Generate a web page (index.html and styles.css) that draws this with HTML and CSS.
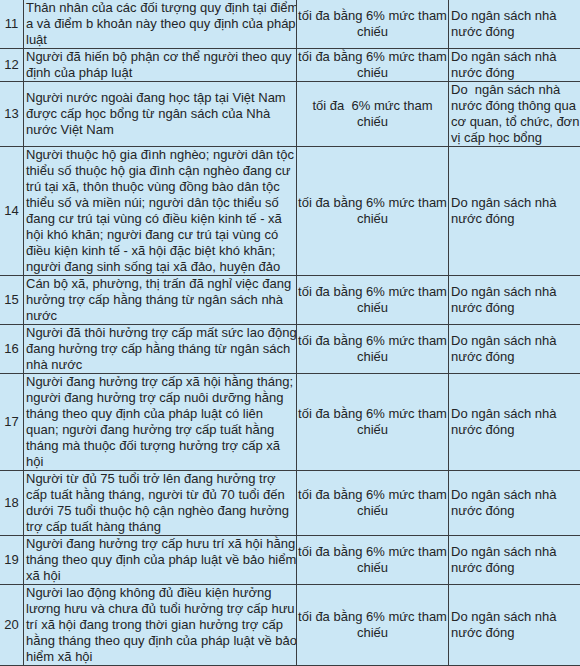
FILE: index.html
```html
<!DOCTYPE html>
<html lang="vi">
<head>
<meta charset="utf-8">
<title>Bảng đối tượng</title>
<link rel="stylesheet" href="styles.css">
</head>
<body>
<table class="tbl">
  <colgroup>
    <col class="c-no">
    <col class="c-desc">
    <col class="c-rate">
    <col class="c-src">
  </colgroup>
  <tbody>
    <tr class="r3">
      <td class="no">11</td>
      <td class="desc">Thân nhân của các đối tượng quy định tại điểm<br>a và điểm b khoản này theo quy định của pháp<br>luật</td>
      <td class="rate">tối đa bằng 6% mức tham<br>chiếu</td>
      <td class="src">Do ngân sách nhà<br>nước đóng</td>
    </tr>
    <tr class="r2">
      <td class="no">12</td>
      <td class="desc">Người đã hiến bộ phận cơ thể người theo quy<br>định của pháp luật</td>
      <td class="rate">tối đa bằng 6% mức tham<br>chiếu</td>
      <td class="src">Do ngân sách nhà<br>nước đóng</td>
    </tr>
    <tr class="r4">
      <td class="no">13</td>
      <td class="desc">Người nước ngoài đang học tập tại Việt Nam<br>được cấp học bổng từ ngân sách của Nhà<br>nước Việt Nam</td>
      <td class="rate">tối đa&nbsp; 6% mức tham<br>chiếu</td>
      <td class="src">Do&nbsp; ngân sách nhà<br>nước đóng thông qua<br>cơ quan, tổ chức, đơn<br>vị cấp học bổng</td>
    </tr>
    <tr class="r8">
      <td class="no">14</td>
      <td class="desc">Người thuộc hộ gia đình nghèo; người dân tộc<br>thiểu số thuộc hộ gia đình cận nghèo đang cư<br>trú tại xã, thôn thuộc vùng đồng bào dân tộc<br>thiểu số và miền núi; người dân tộc thiểu số<br>đang cư trú tại vùng có điều kiện kinh tế - xã<br>hội khó khăn; người đang cư trú tại vùng có<br>điều kiện kinh tế - xã hội đặc biệt khó khăn;<br>người đang sinh sống tại xã đảo, huyện đảo</td>
      <td class="rate">tối đa bằng 6% mức tham<br>chiếu</td>
      <td class="src">Do ngân sách nhà<br>nước đóng</td>
    </tr>
    <tr class="r3">
      <td class="no">15</td>
      <td class="desc">Cán bộ xã, phường, thị trấn đã nghỉ việc đang<br>hưởng trợ cấp hằng tháng từ ngân sách nhà<br>nước</td>
      <td class="rate">tối đa bằng 6% mức tham<br>chiếu</td>
      <td class="src">Do ngân sách nhà<br>nước đóng</td>
    </tr>
    <tr class="r3">
      <td class="no">16</td>
      <td class="desc">Người đã thôi hưởng trợ cấp mất sức lao động<br>đang hưởng trợ cấp hằng tháng từ ngân sách<br>nhà nước</td>
      <td class="rate">tối đa bằng 6% mức tham<br>chiếu</td>
      <td class="src">Do ngân sách nhà<br>nước đóng</td>
    </tr>
    <tr class="r6">
      <td class="no">17</td>
      <td class="desc">Người đang hưởng trợ cấp xã hội hằng tháng;<br>người đang hưởng trợ cấp nuôi dưỡng hằng<br>tháng theo quy định của pháp luật có liên<br>quan; người đang hưởng trợ cấp tuất hằng<br>tháng mà thuộc đối tượng hưởng trợ cấp xã<br>hội</td>
      <td class="rate">tối đa bằng 6% mức tham<br>chiếu</td>
      <td class="src">Do ngân sách nhà<br>nước đóng</td>
    </tr>
    <tr class="r4">
      <td class="no">18</td>
      <td class="desc">Người từ đủ 75 tuổi trở lên đang hưởng trợ<br>cấp tuất hằng tháng, người từ đủ 70 tuổi đến<br>dưới 75 tuổi thuộc hộ cận nghèo đang hưởng<br>trợ cấp tuất hàng tháng</td>
      <td class="rate">tối đa bằng 6% mức tham<br>chiếu</td>
      <td class="src">Do ngân sách nhà<br>nước đóng</td>
    </tr>
    <tr class="r3">
      <td class="no">19</td>
      <td class="desc">Người đang hưởng trợ cấp hưu trí xã hội hằng<br>tháng theo quy định của pháp luật về bảo hiểm<br>xã hội</td>
      <td class="rate">tối đa bằng 6% mức tham<br>chiếu</td>
      <td class="src">Do ngân sách nhà<br>nước đóng</td>
    </tr>
    <tr class="r5">
      <td class="no">20</td>
      <td class="desc">Người lao động không đủ điều kiện hưởng<br>lương hưu và chưa đủ tuổi hưởng trợ cấp hưu<br>trí xã hội đang trong thời gian hưởng trợ cấp<br>hằng tháng theo quy định của pháp luật về bảo<br>hiểm xã hội</td>
      <td class="rate">tối đa bằng 6% mức tham<br>chiếu</td>
      <td class="src">Do ngân sách nhà<br>nước đóng</td>
    </tr>
  </tbody>
</table>
</body>
</html>
```

FILE: styles.css
```css
html, body {
  margin: 0;
  padding: 0;
  overflow: hidden;
  background: #cbe7f5;
}

.tbl {
  table-layout: fixed;
  border-collapse: separate;
  border-spacing: 0;
  width: 589px;
  font-family: "Liberation Sans", Arial, sans-serif;
  font-size: 13px;
  line-height: 16px;
  color: #232527;
  background: #cbe7f5;
}

.c-no { width: 24px; }
.c-desc { width: 273px; }
.c-rate { width: 152px; }
.c-src { width: 140px; }

.tbl td {
  box-sizing: border-box;
  padding: 0;
  border-right: 1px solid #3a3d40;
  border-bottom: 1px solid #3a3d40;
  vertical-align: middle;
  white-space: nowrap;
  overflow: hidden;
}

.tbl td.src { border-right: none; }

.no { text-align: center; }
.desc { padding-left: 2px !important; text-align: left; }
.rate { text-align: center; }
.src { padding-left: 2px !important; text-align: left; }

.r2 td { height: 33px; }
.r3 td { height: 49px; }
.r4 td { height: 65px; }
.r5 td { height: 81px; }
.r6 td { height: 97px; }
.r8 td { height: 129px; }
```
